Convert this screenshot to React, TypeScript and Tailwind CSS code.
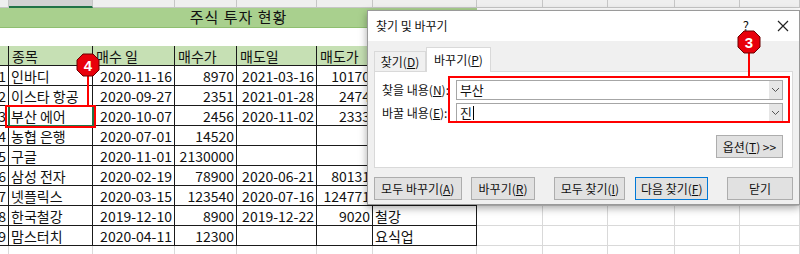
import React from 'react';

const FONT = { fontFamily: '"Noto Sans CJK KR", "Noto Sans", sans-serif' };

// column widths of the sheet, A..L
const COLS = ['w-[9px]', 'w-[84px]', 'w-[82px]', 'w-[62px]', 'w-[80px]', 'w-[56px]', 'w-[104px]', 'w-[66px]', 'w-[65px]', 'w-[67px]', 'w-[65px]', 'w-[60px]'];
const ALIGN = ['justify-end', 'justify-start', 'justify-end', 'justify-end', 'justify-end', 'justify-end', 'justify-start'];

const ROWS: string[][] = [
  ['1', '인바디', '2020-11-16', '8970', '2021-03-16', '10170', ''],
  ['2', '이스타 항공', '2020-09-27', '2351', '2021-01-28', '2474', ''],
  ['3', '부산 에어', '2020-10-07', '2456', '2020-11-02', '2333', ''],
  ['4', '농협 은행', '2020-07-01', '14520', '', '', ''],
  ['5', '구글', '2020-11-01', '2130000', '', '', ''],
  ['6', '삼성 전자', '2020-02-19', '78900', '2020-06-21', '80131', ''],
  ['7', '넷플릭스', '2020-03-15', '123540', '2020-07-16', '124771', ''],
  ['8', '한국철강', '2019-12-10', '8900', '2019-12-22', '9020', '철강'],
  ['9', '맘스터치', '2020-04-11', '12300', '', '', '요식업'],
];

const HEAD = ['', '종목', '매수 일', '매수가', '매도일', '매도가', ''];

function Row({ cells, head }: { cells: string[]; head?: boolean }) {
  return (
    <div className="flex h-[20px]">
      {COLS.map((w, i) => {
        const inTable = i < 7;
        return (
          <div
            key={i}
            className={`${w} shrink-0 flex items-center overflow-hidden whitespace-nowrap border-b border-r text-[14px] leading-none text-[#111] ${
              inTable ? 'border-[#1a1a1a]' : 'border-[#d9d9d9]'
            } ${head && inTable ? 'bg-[#c6e0b4]' : 'bg-white'} ${
              head ? 'justify-start pl-[3px]' : inTable ? `${ALIGN[i]} px-[2px]` : ''
            }`}
          >
            {inTable ? cells[i] : ''}
          </div>
        );
      })}
    </div>
  );
}

function Badge({ n }: { n: string }) {
  return (
    <svg width="24" height="24" viewBox="0 0 24 24">
      <polygon points="7,1 17,1 23,7 23,17 17,23 7,23 1,17 1,7" fill="#e8000b" stroke="#6b0000" strokeWidth="1" />
      <text x="12" y="17.5" textAnchor="middle" fontSize="15" fontWeight="700" fill="#fff" fontFamily="Liberation Sans, sans-serif">
        {n}
      </text>
    </svg>
  );
}

function Btn({ children, className = '', primary }: { children: React.ReactNode; className?: string; primary?: boolean }) {
  return (
    <div
      className={`h-[23px] flex items-center justify-center bg-[#e1e1e1] border text-[12px] text-[#111] ${
        primary ? 'border-[#0078d7]' : 'border-[#adadad]'
      } ${className}`}
    >
      {children}
    </div>
  );
}

function Combo({ value, caret }: { value: string; caret?: boolean }) {
  return (
    <div className="flex h-[20px] w-[332px] border border-[#a6a6a6] bg-white">
      <div className="flex-1 flex items-center pl-[3px] text-[13px] text-[#111]">
        {value}
        {caret && <span className="ml-[1px] inline-block w-[1px] h-[14px] bg-black" />}
      </div>
      <div className="w-[13px] bg-[#e6e6e6] flex items-center justify-center">
        <svg width="9" height="6" viewBox="0 0 9 6">
          <path d="M1 1 L4.5 4.5 L8 1" fill="none" stroke="#555" strokeWidth="1" />
        </svg>
      </div>
    </div>
  );
}

export default function App() {
  return (
    <div className="relative w-[800px] h-[254px] overflow-hidden bg-white" style={FONT}>
      {/* column header strip */}
      <div className="flex h-[8px]">
        {COLS.map((w, i) => (
          <div
            key={i}
            className={`${w} shrink-0 border-r border-[#c6c6c6] ${
              i === 1 ? 'bg-[#d2d2d2] border-b-2 border-b-[#217346]' : 'bg-[#efefef] border-b border-b-[#c6c6c6]'
            }`}
          />
        ))}
      </div>

      {/* title */}
      <div className="flex h-[20px]">
        <div className="w-[477px] shrink-0 bg-[#a9d08e] border-b border-[#8fbf70] flex items-center justify-center text-[15px] text-[#111] tracking-[1px]">
          주식 투자 현황
        </div>
        <div className="flex-1 border-b border-[#d9d9d9]" />
      </div>
      <div className="h-[18px]" />

      <Row cells={HEAD} head />
      {ROWS.map((r) => (
        <Row key={r[0]} cells={r} />
      ))}
      <div className="flex h-[8px]">
        {COLS.map((w, i) => (
          <div key={i} className={`${w} shrink-0 border-r border-[#d9d9d9]`} />
        ))}
      </div>

      {/* active cell */}
      <div className="absolute left-[8px] top-[105px] w-[86px] h-[22px] border-2 border-[#217346]" />

      {/* find & replace dialog */}
      <div className="absolute left-[367px] top-[10px] w-[433px] h-[195px] bg-[#f0f0f0] border border-[#9a9a9a] shadow-[0_3px_8px_rgba(0,0,0,0.35)] flex flex-col">
        <div className="h-[30px] bg-white flex items-center pl-[8px] pr-[10px] text-[12px] text-[#111]">
          <span className="flex-1">찾기 및 바꾸기</span>
          <span className="text-[13px] mr-[28px]">?</span>
          <svg width="12" height="12" viewBox="0 0 12 12">
            <path d="M1 1 L11 11 M11 1 L1 11" stroke="#222" strokeWidth="1.2" />
          </svg>
        </div>

        <div className="px-[6px] pt-[5px] flex flex-col">
          <div className="flex items-end h-[25px]">
            <div className="w-[52px] h-[20px] border border-b-0 border-[#d9d9d9] bg-[#f0f0f0] flex items-center justify-center text-[12px] text-[#111]">
              찾기(<u>D</u>)
            </div>
            <div className="w-[65px] h-[25px] border border-b-0 border-[#d9d9d9] bg-white flex items-center justify-center text-[12px] text-[#111] relative top-[1px] z-10">
              바꾸기(<u>P</u>)
            </div>
          </div>
          <div className="h-[97px] bg-white border border-[#d9d9d9] pl-[7px] pr-[9px] pt-[8px] flex flex-col">
            <div className="flex items-center gap-[0px]">
              <span className="w-[75px] text-[12px] text-[#111]">
                찾을 내용(<u>N</u>):
              </span>
              <Combo value="부산" />
            </div>
            <div className="flex items-center mt-[3px]">
              <span className="w-[75px] text-[12px] text-[#111]">
                바꿀 내용(<u>E</u>):
              </span>
              <Combo value="진" caret />
            </div>
            <div className="flex justify-end mt-[12px] pr-[-0px]">
              <Btn className="w-[67px]">
                옵션(<u>T</u>) &gt;&gt;
              </Btn>
            </div>
          </div>
        </div>

        <div className="flex px-[6px] mt-[9px]">
          <Btn className="w-[89px]">
            모두 바꾸기(<u>A</u>)
          </Btn>
          <Btn className="w-[66px] ml-[9px]">
            바꾸기(<u>R</u>)
          </Btn>
          <Btn className="w-[72px] ml-[19px]">
            모두 찾기(<u>I</u>)
          </Btn>
          <Btn className="w-[74px] ml-[10px]" primary>
            다음 찾기(<u>F</u>)
          </Btn>
          <Btn className="w-[67px] ml-[19px]">닫기</Btn>
        </div>
      </div>

      {/* annotations */}
      <div className="absolute left-[448px] top-[76px] w-[342px] h-[47px] border-2 border-[#ff0000]" />
      <div className="absolute left-[748px] top-[52px] w-[2px] h-[25px] bg-[#ff0000]" />
      <div className="absolute left-[737px] top-[30px]">
        <Badge n="3" />
      </div>

      <div className="absolute left-[5px] top-[105px] w-[91px] h-[23px] border-2 border-[#ff0000]" />
      <div className="absolute left-[87px] top-[76px] w-[2px] h-[30px] bg-[#ff0000]" />
      <div className="absolute left-[76px] top-[53px]">
        <Badge n="4" />
      </div>
    </div>
  );
}
